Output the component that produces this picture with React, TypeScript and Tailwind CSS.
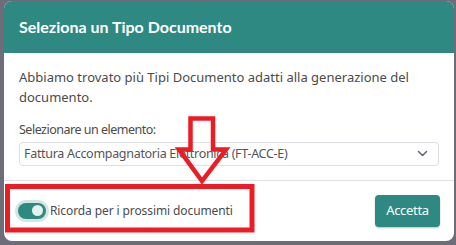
import React from 'react';

const ChevronDown = () => (
  <svg width="11" height="7" viewBox="0 0 11 7" fill="none" className="shrink-0">
    <path d="M1.5 1.5 L5.5 5.5 L9.5 1.5" stroke="#5b6270" strokeWidth="1.5" strokeLinecap="round" strokeLinejoin="round" />
  </svg>
);

const Toggle = () => (
  <div className="flex items-center justify-end w-[28px] h-[16px] rounded-full bg-[#2e8982] ring-[3px] ring-[#d3e6e4] px-[3px] shrink-0">
    <div className="w-[11px] h-[11px] rounded-full bg-[#e4f1ef]" />
  </div>
);

const Annotation = () => (
  <svg width="456" height="245" className="absolute left-0 top-0 pointer-events-none">
    <polygon
      points="190.5,118.5 213,118.5 213,149.5 226,149.5 202,181 179,149.5 190.5,149.5"
      fill="none"
      stroke="#ec1c24"
      strokeWidth="4.5"
      strokeLinejoin="miter"
    />
    <rect x="7.5" y="186.5" width="244.5" height="43.5" fill="none" stroke="#ec1c24" strokeWidth="5" />
  </svg>
);

export default function App() {
  return (
    <div
      className="relative w-[456px] h-[245px] bg-[#6d6c78] pt-px pl-[4px] overflow-hidden"
      style={{ fontFamily: '"Noto Sans", "Open Sans", sans-serif' }}
    >
      <div className="w-[450px] h-[240px] rounded-[8px] bg-white flex flex-col overflow-hidden">
        <div className="h-[52px] bg-[#2e8982] flex items-center px-[15px]">
          <h4
            className="text-white text-[16px] font-bold leading-none"
            style={{ fontFamily: 'Lato, "Noto Sans", sans-serif' }}
          >
            Seleziona un Tipo Documento
          </h4>
        </div>

        <div className="px-[15px] pt-[15px] pb-[14px] text-[13px] leading-[19.5px] text-[#4b4b4b]">
          <p className="mb-[13px]">Abbiamo trovato più Tipi Documento adatti alla generazione del documento.</p>
          <label className="block mb-[2px] text-[12.5px] tracking-[-0.5px]">Selezionare un elemento:</label>
          <div className="h-[24px] border border-[#dcdfe3] rounded-[4px] flex items-center justify-between pl-[4px] pr-[10px] text-[#555] text-[12.5px] tracking-[-0.3px]">
            <span>Fattura Accompagnatoria Elettronica (FT-ACC-E)</span>
            <ChevronDown />
          </div>
        </div>

        <div className="border-t border-[#dee2e6] flex-1 flex items-center justify-between pl-[14px] pr-[14px]">
          <div className="flex items-center gap-[4px] text-[12px] tracking-[-0.1px] text-[#4b4b4b]">
            <Toggle />
            <span>Ricorda per i prossimi documenti</span>
          </div>
          <button className="w-[65px] h-[32px] rounded-[4px] bg-[#2e8982] text-white text-[13px] tracking-[-0.3px] shadow-[0_1px_2px_rgba(0,0,0,0.25)]">
            Accetta
          </button>
        </div>
      </div>
      <Annotation />
    </div>
  );
}
